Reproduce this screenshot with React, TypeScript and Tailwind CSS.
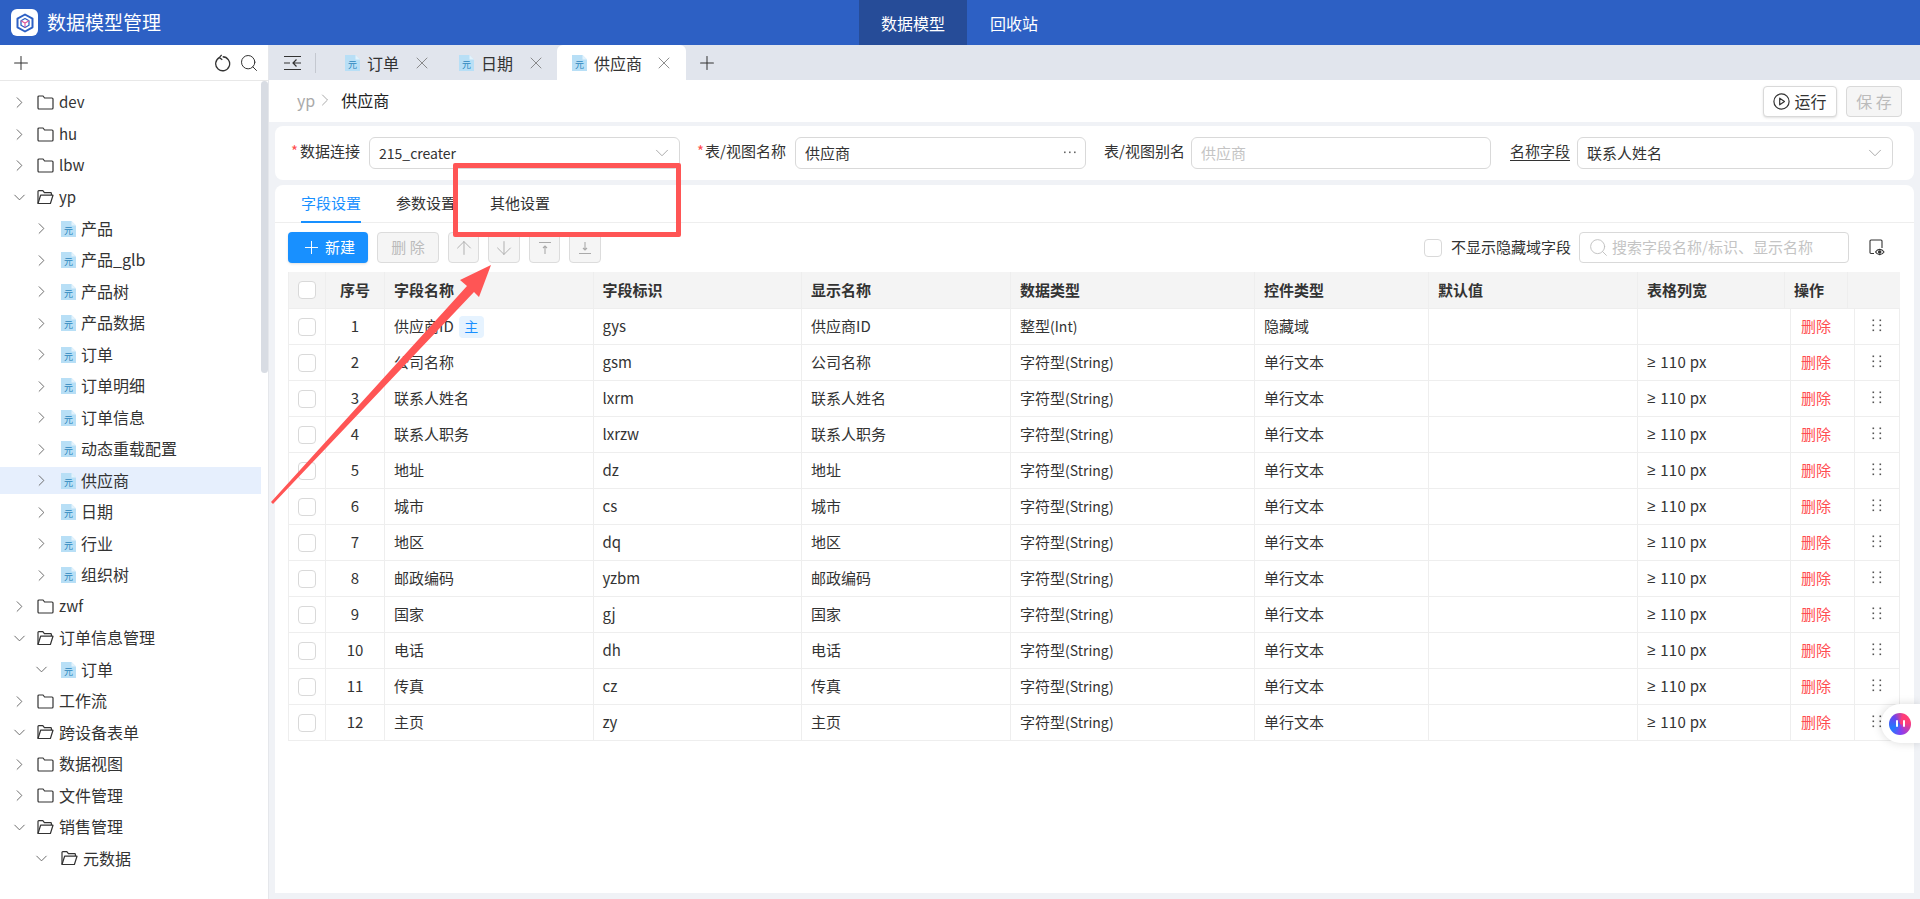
import { ArrowDown, ArrowUp, ChevronDown, ChevronRight, Plus, Search, X } from "lucide-react";

type TreeNode = { label: string; level: 0 | 1; kind: "folder" | "meta"; open?: boolean; active?: boolean };

const tree: TreeNode[] = [
  { label: "dev", level: 0, kind: "folder" },
  { label: "hu", level: 0, kind: "folder" },
  { label: "lbw", level: 0, kind: "folder" },
  { label: "yp", level: 0, kind: "folder", open: true },
  { label: "产品", level: 1, kind: "meta" },
  { label: "产品_glb", level: 1, kind: "meta" },
  { label: "产品树", level: 1, kind: "meta" },
  { label: "产品数据", level: 1, kind: "meta" },
  { label: "订单", level: 1, kind: "meta" },
  { label: "订单明细", level: 1, kind: "meta" },
  { label: "订单信息", level: 1, kind: "meta" },
  { label: "动态重载配置", level: 1, kind: "meta" },
  { label: "供应商", level: 1, kind: "meta", active: true },
  { label: "日期", level: 1, kind: "meta" },
  { label: "行业", level: 1, kind: "meta" },
  { label: "组织树", level: 1, kind: "meta" },
  { label: "zwf", level: 0, kind: "folder" },
  { label: "订单信息管理", level: 0, kind: "folder", open: true },
  { label: "订单", level: 1, kind: "meta", open: true },
  { label: "工作流", level: 0, kind: "folder" },
  { label: "跨设备表单", level: 0, kind: "folder", open: true },
  { label: "数据视图", level: 0, kind: "folder" },
  { label: "文件管理", level: 0, kind: "folder" },
  { label: "销售管理", level: 0, kind: "folder", open: true },
  { label: "元数据", level: 1, kind: "folder", open: true },
];

const fields = [
  ["供应商ID", "gys", "供应商ID", "整型", "(Int)", "隐藏域", ""],
  ["公司名称", "gsm", "公司名称", "字符型", "(String)", "单行文本", "110 px"],
  ["联系人姓名", "lxrm", "联系人姓名", "字符型", "(String)", "单行文本", "110 px"],
  ["联系人职务", "lxrzw", "联系人职务", "字符型", "(String)", "单行文本", "110 px"],
  ["地址", "dz", "地址", "字符型", "(String)", "单行文本", "110 px"],
  ["城市", "cs", "城市", "字符型", "(String)", "单行文本", "110 px"],
  ["地区", "dq", "地区", "字符型", "(String)", "单行文本", "110 px"],
  ["邮政编码", "yzbm", "邮政编码", "字符型", "(String)", "单行文本", "110 px"],
  ["国家", "gj", "国家", "字符型", "(String)", "单行文本", "110 px"],
  ["电话", "dh", "电话", "字符型", "(String)", "单行文本", "110 px"],
  ["传真", "cz", "传真", "字符型", "(String)", "单行文本", "110 px"],
  ["主页", "zy", "主页", "字符型", "(String)", "单行文本", "110 px"],
];

const cell = "flex items-center h-full border-r border-[#eeeeee] shrink-0";

function MetaIcon() {
  return (
    <svg width="15" height="16" viewBox="0 0 15 16" className="shrink-0">
      <path d="M0 0h10.5L15 4.5V16H0z" fill="#b8dff6" />
      <path d="M10.5 0L15 4.5h-4.500z" fill="#e3f3fc" />
      <text x="7.5" y="12.5" textAnchor="middle" fontSize="9" fill="#2b86bd" fontFamily="Noto Sans CJK SC">元</text>
    </svg>
  );
}

function FolderIcon({ open }: { open?: boolean }) {
  return (
    <svg width="17" height="15" viewBox="0 0 17 15" fill="none" stroke="#333" strokeWidth="1.2" className="shrink-0">
      {open ? (
        <>
          <path d="M1 13.5V1.5a.8.8 0 0 1 .8-.8h4l1.6 2h6.2a.8.8 0 0 1 .8.8v1.6" />
          <path d="M1 13.5h12.4l2.6-8.3H3.6z" strokeLinejoin="round" />
        </>
      ) : (
        <path d="M1 2a1 1 0 0 1 1-1h4l1.6 2H15a1 1 0 0 1 1 1v9a1 1 0 0 1-1 1H2a1 1 0 0 1-1-1z" />
      )}
    </svg>
  );
}

function TreeRow({ node }: { node: TreeNode }) {
  const Caret = node.open ? ChevronDown : ChevronRight;
  const latin = /^[a-z]+$/.test(node.label);
  return (
    <div className={`flex items-center h-[27px] mb-[4.5px] w-[261px] text-[#333] ${latin ? "text-[15px]" : "text-[16px]"} ${node.active ? "bg-[#e6effd]" : ""}`}>
      <div className={node.level === 0 ? "w-[37px] pl-[10px] shrink-0" : "w-[61px] pl-[32px] shrink-0"}>
        <Caret size={19} strokeWidth={1.2} color="#666" />
      </div>
      {node.kind === "meta" ? <MetaIcon /> : <FolderIcon open={node.open} />}
      <span className={latin ? "ml-[5px]" : "relative -top-px ml-[5px]"}>{node.label}</span>
    </div>
  );
}

function DocTab({ label, width, active }: { label: string; width: string; active?: boolean }) {
  return (
    <div className={`flex items-center h-full pl-[15px] text-[16px] text-[#333] ${width} ${active ? "bg-white rounded-t-[6px]" : ""}`}>
      <MetaIcon />
      <span className="ml-[7px]">{label}</span>
      <X size={20} strokeWidth={1} color="#777" className={active ? "ml-[12px]" : "ml-[13px]"} />
    </div>
  );
}

function GripDots() {
  return (
    <svg width="10" height="13" viewBox="0 0 10 13" fill="#555">
      <rect x="0.5" y="0.5" width="1.6" height="1.6" />
      <rect x="7.5" y="0.5" width="1.6" height="1.6" />
      <rect x="0.5" y="5.5" width="1.6" height="1.6" />
      <rect x="7.5" y="5.5" width="1.6" height="1.6" />
      <rect x="0.5" y="10.5" width="1.6" height="1.6" />
      <rect x="7.5" y="10.5" width="1.6" height="1.6" />
    </svg>
  );
}

function Checkbox() {
  return <div className="w-[18px] h-[18px] rounded-[4px] border border-[#d9d9d9] bg-white shrink-0" />;
}

function MoveButton({ children, width }: { children: React.ReactNode; width: string }) {
  return (
    <div className={`flex items-center justify-center h-[31px] rounded-[4px] border border-[#dcdcdc] bg-[#f5f5f5] ${width}`}>
      {children}
    </div>
  );
}

export default function App() {
  return (
    <div className="relative flex flex-col w-[1920px] h-[899px] overflow-hidden bg-white text-[#333] font-['Noto_Sans_CJK_SC',sans-serif]">
      {/* Top bar */}
      <header className="relative flex items-center h-[45px] bg-[#2d60c4] text-white shrink-0">
        <div className="flex items-center justify-center w-[27px] h-[27px] ml-[11px] rounded-[6px] bg-white">
          <svg width="20" height="20" viewBox="0 0 20 20" fill="none">
            <path d="M10 1.5l7.5 4.2v8.6L10 18.5l-7.5-4.2V5.7z" stroke="#2d60c4" strokeWidth="2" strokeLinejoin="round" />
            <path d="M10 5.5l4 2.2v4.6l-4 2.2-4-2.2V7.7z" stroke="#2d60c4" strokeWidth="1.3" strokeLinejoin="round" />
            <path d="M6 7.7l4 2.3 4-2.3M10 10v4.5" stroke="#e0559a" strokeWidth="1.1" />
          </svg>
        </div>
        <span className="ml-[9px] text-[19px]">数据模型管理</span>
        <nav className="flex h-full ml-[698px] text-[16px]">
          <div className="flex items-center justify-center w-[108px] bg-[#264c98]">数据模型</div>
          <div className="flex items-center ml-[23px]">回收站</div>
        </nav>
      </header>

      <div className="flex flex-1 min-h-0">
        {/* Sidebar */}
        <aside className="relative flex flex-col w-[269px] shrink-0 border-r border-[#e5e7eb] bg-white">
          <div className="flex items-center justify-between h-[36px] pl-[10px] pr-[9px] border-b border-[#e8e8e8] shrink-0">
            <Plus size={22} strokeWidth={1.1} color="#333" />
            <div className="flex items-center gap-[8px]">
              <svg width="17" height="18" viewBox="0 0 16 17" fill="none" stroke="#333" strokeWidth="1.2">
                <path d="M5 3.4A6.6 6.6 0 1 0 8.2 2.600" />
                <path d="M7.2 0.8L5 3.4l2.8 2" />
              </svg>
              <Search size={20} strokeWidth={1.2} color="#333" />
            </div>
          </div>
          <div className="pt-[8px]">
            {tree.map((node, i) => (
              <TreeRow key={i} node={node} />
            ))}
          </div>
          <div className="absolute right-0 top-[36px] w-[7px] h-[292px] rounded-[4px] bg-[#d8dce3]" />
        </aside>

        {/* Main */}
        <main className="flex flex-col flex-1 min-w-0 bg-[#f0f2f6]">
          <div className="flex items-center h-[35px] bg-[#e1e5ed] shrink-0">
            <svg width="18" height="16" viewBox="0 0 18 16" fill="none" stroke="#333" strokeWidth="1.2" className="ml-[15px] shrink-0">
              <path d="M0 1.5h17M0 14.5h17M0 8h6M17 8H9.500M12.500 4.500L9 8l3.500 3.500" />
            </svg>
            <div className="w-px h-[20px] ml-[13px] bg-[#c4c8d0]" />
            <div className="flex items-center h-full ml-[14px]">
              <DocTab label="订单" width="w-[114px]" />
              <DocTab label="日期" width="w-[113px]" />
              <DocTab label="供应商" width="w-[129px]" active />
            </div>
            <Plus size={22} strokeWidth={1.1} color="#333" className="ml-[10px]" />
          </div>

          <div className="flex items-center justify-between h-[42px] pl-[28px] pr-[18px] bg-white shrink-0">
            <div className="relative -top-px flex items-center text-[16px]">
              <span className="text-[#aaaaaa]">yp</span>
              <ChevronRight size={20} strokeWidth={1} color="#999" />
              <span className="ml-[6px] text-[#222]">供应商</span>
            </div>
            <div className="flex items-center gap-[9px] text-[16px]">
              <div className="flex items-center justify-center w-[74px] h-[31px] rounded-[4px] border border-[#d9d9d9] shadow-sm bg-white">
                <svg width="17" height="17" viewBox="0 0 17 17" fill="none" stroke="#333" strokeWidth="1.2">
                  <circle cx="8.5" cy="8.5" r="7.6" />
                  <path d="M6.7 5.2l4.8 3.3-4.8 3.3z" strokeLinejoin="round" />
                </svg>
                <span className="ml-[4px]">运行</span>
              </div>
              <div className="flex items-center justify-center w-[56px] h-[31px] rounded-[4px] border border-[#d9d9d9] bg-[#f5f5f5] text-[#bbbbbb] whitespace-pre">
                保 存
              </div>
            </div>
          </div>

          {/* Form */}
          <div className="flex items-center h-[54px] mx-[6px] mt-[4px] pl-[16px] rounded-[8px] bg-white text-[15px] shrink-0">
            <div className="w-[78px] pb-[3px]"><span className="text-[#ff4d4f] mr-[2px]">*</span>数据连接</div>
            <div className="flex items-center justify-between w-[311px] h-[32px] pl-[9px] pr-[6px] rounded-[6px] border border-[#d9d9d9]">
              <span className="text-[14px]">215_creater</span>
              <ChevronDown size={22} strokeWidth={0.9} color="#999" />
            </div>
            <div className="w-[98px] ml-[17px] pb-[3px]"><span className="text-[#ff4d4f] mr-px">*</span>表/视图名称</div>
            <div className="flex items-center justify-between w-[291px] h-[32px] px-[9px] rounded-[6px] border border-[#d9d9d9]">
              <span>供应商</span>
              <svg width="12" height="3" viewBox="0 0 12 3" fill="#666" className="mb-[2px]">
                <rect x="0" y="0.5" width="1.6" height="1.6" />
                <rect x="5" y="0.5" width="1.6" height="1.6" />
                <rect x="10" y="0.5" width="1.6" height="1.6" />
              </svg>
            </div>
            <div className="w-[87px] ml-[18px] pb-[3px]">表/视图别名</div>
            <div className="flex items-center w-[300px] h-[32px] px-[9px] rounded-[6px] border border-[#d9d9d9] text-[#c4c4c4]">供应商</div>
            <div className="w-[67px] ml-[19px] pb-[3px]"><span className="underline underline-offset-[3px]">名称字段</span></div>
            <div className="flex items-center justify-between w-[316px] h-[32px] pl-[9px] pr-[6px] rounded-[6px] border border-[#d9d9d9]">
              <span>联系人姓名</span>
              <ChevronDown size={22} strokeWidth={0.9} color="#999" />
            </div>
          </div>

          {/* Fields card */}
          <section className="flex flex-col flex-1 min-h-0 mx-[6px] mt-[5px] mb-[6px] rounded-t-[8px] bg-white text-[15px]">
            <div className="flex h-[38px] pl-[26px] border-b border-[#eeeeee] shrink-0">
              <div className="flex items-center h-[38px] border-b-2 border-[#1890ff] text-[#1890ff]">字段设置</div>
              <div className="flex items-center ml-[35px]">参数设置</div>
              <div className="flex items-center ml-[34px]">其他设置</div>
            </div>

            <div className="flex items-center h-[31px] mt-[9px] pl-[13px] shrink-0">
              <div className="flex items-center justify-center w-[80px] h-[31px] rounded-[4px] bg-[#1890ff] text-white shadow-sm">
                <Plus size={21} strokeWidth={1.1} />
                <span className="ml-[3px]">新建</span>
              </div>
              <div className="flex items-center justify-center w-[62px] h-[31px] ml-[9px] rounded-[4px] border border-[#dcdcdc] bg-[#f5f5f5] text-[#bbbbbb] whitespace-pre">
                删 除
              </div>
              <div className="flex items-center ml-[9px] gap-[9px]">
                <MoveButton width="w-[31px]"><ArrowUp size={22} strokeWidth={1} color="#aaa" /></MoveButton>
                <MoveButton width="w-[32px]"><ArrowDown size={22} strokeWidth={1} color="#aaa" /></MoveButton>
                <MoveButton width="w-[31px]">
                  <svg width="14" height="14" viewBox="0 0 14 14" fill="none" stroke="#aaa" strokeWidth="1.1">
                    <path d="M1 1.5h12M7 13V5M5 7l2-2 2 2" />
                  </svg>
                </MoveButton>
                <MoveButton width="w-[32px]">
                  <svg width="14" height="14" viewBox="0 0 14 14" fill="none" stroke="#aaa" strokeWidth="1.1">
                    <path d="M1 12.5h12M7 1v8M5 7l2 2 2-2" />
                  </svg>
                </MoveButton>
              </div>
              <div className="flex items-center ml-auto pr-[29px]">
                <Checkbox />
                <span className="ml-[9px]">不显示隐藏域字段</span>
                <div className="flex items-center w-[270px] h-[31px] ml-[8px] px-[8px] rounded-[4px] border border-[#d9d9d9] text-[#c4c4c4]">
                  <Search size={21} strokeWidth={1} color="#bbb" />
                  <span className="ml-[3px]">搜索字段名称/标识、显示名称</span>
                </div>
                <svg width="16" height="17" viewBox="0 0 16 17" fill="none" stroke="#333" strokeWidth="1.1" className="ml-[20px]">
                  <path d="M5 14.5H2a1 1 0 0 1-1-1V2a1 1 0 0 1 1-1h10a1 1 0 0 1 1 1v7" />
                  <path d="M6.5 13c1.2-1.8 2.6-2.6 4.2-2.6S13.8 11.200 15 13c-1.200 1.800-2.700 2.600-4.300 2.600S7.700 14.800 6.500 13z" />
                  <circle cx="10.700" cy="13" r="1.200" fill="#333" />
                </svg>
              </div>
            </div>

            {/* Table */}
            <div className="w-[1612px] ml-[13px] mt-[9px] border-l border-[#eeeeee] shrink-0">
              <div className="flex h-[37px] bg-[#f4f4f4] border-b border-[#eeeeee] font-bold text-[#333]">
                <div className={`${cell} w-[37px] justify-center`}><Checkbox /></div>
                <div className={`${cell} w-[59px] justify-center`}>序号</div>
                <div className={`${cell} w-[208.500px] pl-[9px]`}>字段名称</div>
                <div className={`${cell} w-[208.500px] pl-[9px]`}>字段标识</div>
                <div className={`${cell} w-[209px] pl-[9px]`}>显示名称</div>
                <div className={`${cell} w-[244px] pl-[9px]`}>数据类型</div>
                <div className={`${cell} w-[174px] pl-[9px]`}>控件类型</div>
                <div className={`${cell} w-[209px] pl-[9px]`}>默认值</div>
                <div className={`${cell} w-[147px] pl-[9px]`}>表格列宽</div>
                <div className={`${cell} w-[63px] pl-[9px]`}>操作</div>
                <div className="w-[52px] shrink-0" />
              </div>
              {fields.map((row, i) => (
                <div key={i} className="flex h-[36px] border-b border-[#eeeeee]">
                  <div className={`${cell} w-[37px] justify-center`}><Checkbox /></div>
                  <div className={`${cell} w-[59px] justify-center`}>{i + 1}</div>
                  <div className={`${cell} w-[208.500px] pl-[9px]`}>
                    {row[0]}
                    {i === 0 && (
                      <span className="flex items-center justify-center w-[25px] h-[22px] ml-[5px] rounded-[4px] bg-[#e6f3ff] text-[14px] text-[#1890ff]">主</span>
                    )}
                  </div>
                  <div className={`${cell} w-[208.500px] pl-[9px]`}>{row[1]}</div>
                  <div className={`${cell} w-[209px] pl-[9px]`}>{row[2]}</div>
                  <div className={`${cell} w-[244px] pl-[9px]`}>
                    {row[3]}
                    <span className="text-[14px]">{row[4]}</span>
                  </div>
                  <div className={`${cell} w-[174px] pl-[9px]`}>{row[5]}</div>
                  <div className={`${cell} w-[209px] pl-[9px]`} />
                  <div className={`${cell} w-[153px] pl-[9px]`}>
                    {row[6] && (
                      <>
                        <span className="font-['Liberation_Sans',sans-serif] mr-[5px]">≥</span>
                        <span className="tracking-[0.3px]">{row[6]}</span>
                      </>
                    )}
                  </div>
                  <div className={`${cell} w-[64px] pl-[10px] text-[#ff4d4f]`}>删除</div>
                  <div className={`${cell} w-[45px] justify-center pb-[3px]`}><GripDots /></div>
                </div>
              ))}
            </div>
          </section>
        </main>
      </div>

      {/* Floating assistant */}
      <div className="absolute right-0 top-[704px] flex items-center w-[39px] h-[39px] pl-[8px] rounded-l-[20px] bg-white shadow-[0_0_10px_rgba(0,0,0,0.15)]">
        <div className="flex items-center justify-center gap-[5px] w-[22px] h-[22px] rounded-full bg-[conic-gradient(from_20deg,#ff3d78,#ff3d78_60deg,#8a3df0_150deg,#1f7bff_220deg,#6a45f0_300deg,#ff3d78)]">
          <div className="w-[2px] h-[7px] rounded-full bg-white" />
          <div className="w-[2px] h-[7px] rounded-full bg-white" />
        </div>
      </div>

      {/* Red annotation over the screenshot */}
      <div className="absolute left-[453px] top-[163px] w-[228px] h-[74px] border-[5px] border-[#ff5555] rounded-[2px]" />
      <svg className="absolute left-0 top-0 pointer-events-none" width="1920" height="899">
        <polygon points="491,265 460,280 467,286 271,502 273,504 474,292 479,297" fill="#ff5555" />
      </svg>
    </div>
  );
}
